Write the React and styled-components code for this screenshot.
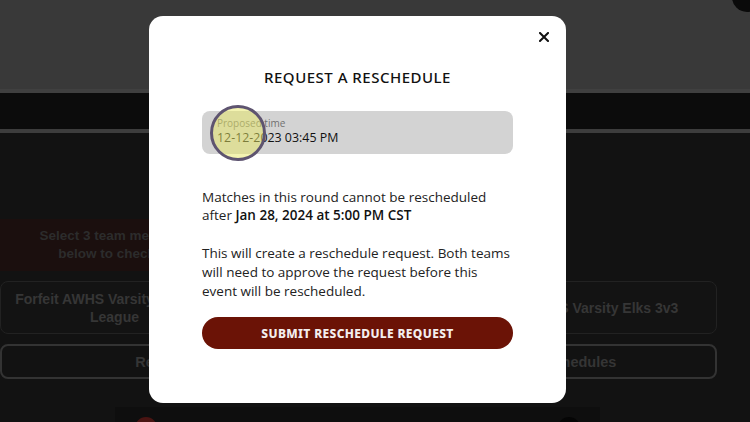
import React from "react";
import styled, { createGlobalStyle } from "styled-components";

const Global = createGlobalStyle`
  html, body { margin: 0; padding: 0; background: #121212; }
  body { width: 750px; height: 422px; overflow: hidden; font-family: "Liberation Sans", Arial, sans-serif; }
  * { box-sizing: border-box; }
`;

const Page = styled.div`
  position: relative;
  width: 750px;
  height: 422px;
  overflow: hidden;
  background: #121212;
`;

const Header = styled.header`
  height: 93px;
  background: #393939;
  border-bottom: 4px solid #404040;
  display: flex;
  justify-content: flex-end;
`;

const Avatar = styled.div`
  width: 30px;
  height: 30px;
  border-radius: 50%;
  background: #0a0a0a;
  margin: -18px -12px 0 0;
`;

const Nav = styled.nav`
  height: 40px;
  background: #0c0c0c;
  border-bottom: 4px solid #3d3d3d;
`;

const Main = styled.main`
  width: 717px;
  padding-top: 86px;
`;

const Grid3 = styled.div`
  display: grid;
  grid-template-columns: repeat(3, 1fr);
  column-gap: 15px;
`;

const Banner = styled.div`
  height: 52px;
  background: #1b0f0e;
  color: #2c2c2c;
  font-weight: 700;
  font-size: 13.5px;
  line-height: 18px;
  text-align: center;
  display: flex;
  align-items: center;
  justify-content: center;
  padding: 0 20px;
`;

const Cards = styled(Grid3)`
  margin-top: 10px;
`;

const Card = styled.div`
  height: 53px;
  border: 1px solid #222222;
  border-radius: 8px;
  background: #131313;
  color: #363636;
  font-weight: 700;
  font-size: 14px;
  line-height: 18px;
  text-align: center;
  display: flex;
  align-items: center;
  justify-content: center;
  padding: 0 8px;
`;

const Actions = styled.div`
  margin-top: 10px;
  display: grid;
  grid-template-columns: 1fr 1fr;
  column-gap: 13px;
`;

const GhostButton = styled.div`
  height: 35px;
  border: 2px solid #333333;
  border-radius: 8px;
  color: #353535;
  font-weight: 700;
  font-size: 14.5px;
  display: flex;
  align-items: center;
  justify-content: center;
`;

const Bottom = styled.div`
  margin: 28px 0 0 115px;
  width: 485px;
  height: 30px;
  background: #0e0e0e;
  display: flex;
  justify-content: space-between;
  padding: 10px 20px 0;
`;

const Dot = styled.div`
  width: 22px;
  height: 22px;
  border-radius: 50%;
  background: ${(p) => p.$c};
`;

const Modal = styled.div`
  position: absolute;
  left: 149px;
  top: 16px;
  width: 417px;
  height: 387px;
  background: #ffffff;
  border-radius: 14px;
  padding: 51px 53px 0;
  display: flex;
  flex-direction: column;
`;

const Close = styled.button`
  position: absolute;
  top: 14px;
  right: 15px;
  width: 14px;
  height: 14px;
  padding: 0;
  border: 0;
  background: none;
  display: flex;
  align-items: center;
  justify-content: center;
`;

const Title = styled.h2`
  margin: 0;
  font-family: "Noto Sans", sans-serif;
  font-weight: 500;
  font-size: 15px;
  line-height: 20px;
  letter-spacing: 0.5px;
  text-align: center;
  color: #111111;
`;

const Field = styled.div`
  position: relative;
  margin-top: 24px;
  height: 43px;
  background: #d3d3d3;
  border-radius: 8px;
  padding: 6px 15px 0;
  display: flex;
  flex-direction: column;
`;

const FieldLabel = styled.span`
  font-family: "Open Sans", sans-serif;
  font-size: 10px;
  line-height: 13px;
  color: #707070;
`;

const FieldValue = styled.span`
  font-family: "Open Sans", sans-serif;
  font-size: 12.4px;
  line-height: 16px;
  color: #111111;
`;

const Highlight = styled.div`
  position: absolute;
  left: 8px;
  top: -6px;
  width: 56px;
  height: 56px;
  border-radius: 50%;
  border: 3px solid #5e5470;
  background: rgba(232, 232, 100, 0.5);
`;

const Para = styled.p`
  margin: ${(p) => p.$mt}px 0 0;
  font-family: "Open Sans", sans-serif;
  font-size: 13.5px;
  line-height: ${(p) => p.$lh}px;
  color: #222222;
  white-space: nowrap;
  b { font-weight: 600; color: #111; }
`;

const Submit = styled.button`
  margin-top: 16.5px;
  height: 32px;
  border: 0;
  border-radius: 16px;
  background: #6b1306;
  color: #f4eeee;
  font-family: "Noto Sans", sans-serif;
  font-weight: 800;
  font-size: 12px;
  letter-spacing: 0.35px;
`;

export default function App() {
  return (
    <>
      <Global />
      <Page>
        <Header>
          <Avatar />
        </Header>
        <Nav />
        <Main>
          <Grid3>
            <Banner>Select 3 team members below to check in</Banner>
          </Grid3>
          <Cards>
            <Card>Forfeit AWHS Varsity Elks 3v3 League</Card>
            <Card />
            <Card>AWHS Varsity Elks 3v3</Card>
          </Cards>
          <Actions>
            <GhostButton>Reschedule</GhostButton>
            <GhostButton>Pending Reschedules</GhostButton>
          </Actions>
          <Bottom>
            <Dot $c="#4a1412" />
            <Dot $c="#050505" />
          </Bottom>
        </Main>

        <Modal>
          <Close aria-label="Close">
            <svg width="10" height="10" viewBox="0 0 10 10">
              <path d="M1 1 L9 9 M9 1 L1 9" stroke="#111" strokeWidth="2" strokeLinecap="square" />
            </svg>
          </Close>
          <Title>REQUEST A RESCHEDULE</Title>
          <Field>
            <FieldLabel>Proposed time</FieldLabel>
            <FieldValue>12-12-2023 03:45 PM</FieldValue>
            <Highlight />
          </Field>
          <Para $mt={34} $lh={18}>
            Matches in this round cannot be rescheduled
            <br />
            after <b>Jan 28, 2024 at 5:00 PM CST</b>
          </Para>
          <Para $mt={19.5} $lh={19}>
            This will create a reschedule request. Both teams
            <br />
            will need to approve the request before this
            <br />
            event will be rescheduled.
          </Para>
          <Submit>SUBMIT RESCHEDULE REQUEST</Submit>
        </Modal>
      </Page>
    </>
  );
}
